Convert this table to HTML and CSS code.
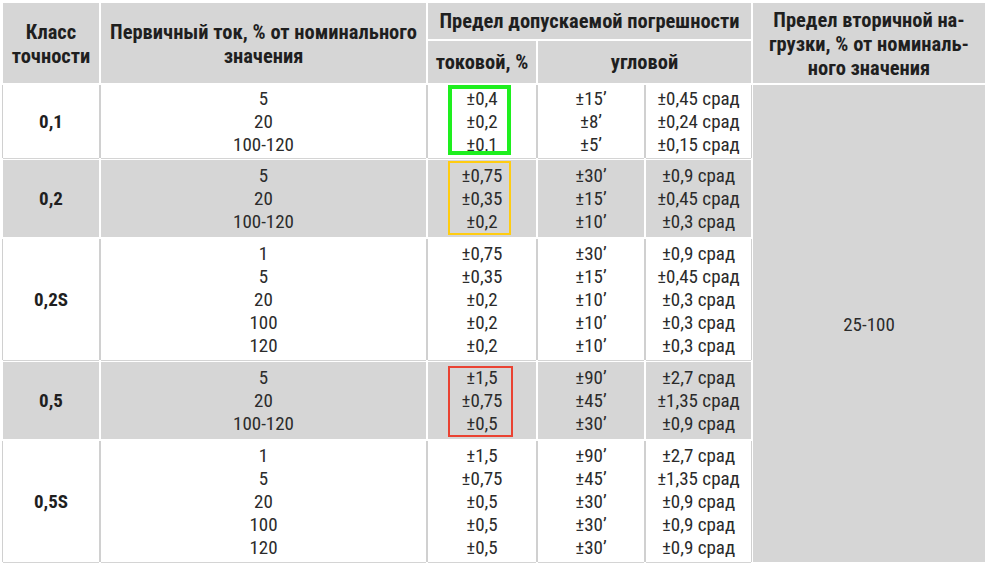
FILE: index.html
```html
<!DOCTYPE html>
<html lang="ru">
<head>
<meta charset="utf-8">
<title>Классы точности</title>
<link rel="stylesheet" href="styles.css">
</head>
<body>
<table class="acc">
  <colgroup>
    <col class="c1"><col class="c2"><col class="c3"><col class="c4"><col class="c5"><col class="c6">
  </colgroup>
  <thead>
    <tr class="h1">
      <th rowspan="2">Класс<br>точности</th>
      <th rowspan="2">Первичный ток, % от номинального<br>значения</th>
      <th colspan="3">Предел допускаемой погрешности</th>
      <th rowspan="2" class="hr">Предел вторичной на-<br>грузки, % от номиналь-<br>ного значения</th>
    </tr>
    <tr class="h2">
      <th>токовой, %</th>
      <th colspan="2">угловой</th>
    </tr>
  </thead>
  <tbody>
    <tr class="w first">
      <td class="cls">0,1</td>
      <td>5<br>20<br>100-120</td>
      <td class="bx green">±0,4<br>±0,2<br>±0,1</td>
      <td>±15’<br>±8’<br>±5’</td>
      <td>±0,45 срад<br>±0,24 срад<br>±0,15 срад</td>
      <td rowspan="5" class="load">25-100</td>
    </tr>
    <tr class="g">
      <td class="cls">0,2</td>
      <td>5<br>20<br>100-120</td>
      <td class="bx yellow">±0,75<br>±0,35<br>±0,2</td>
      <td>±30’<br>±15’<br>±10’</td>
      <td>±0,9 срад<br>±0,45 срад<br>±0,3 срад</td>
    </tr>
    <tr class="w">
      <td class="cls">0,2S</td>
      <td>1<br>5<br>20<br>100<br>120</td>
      <td>±0,75<br>±0,35<br>±0,2<br>±0,2<br>±0,2</td>
      <td>±30’<br>±15’<br>±10’<br>±10’<br>±10’</td>
      <td>±0,9 срад<br>±0,45 срад<br>±0,3 срад<br>±0,3 срад<br>±0,3 срад</td>
    </tr>
    <tr class="g">
      <td class="cls">0,5</td>
      <td>5<br>20<br>100-120</td>
      <td class="bx red">±1,5<br>±0,75<br>±0,5</td>
      <td>±90’<br>±45’<br>±30’</td>
      <td>±2,7 срад<br>±1,35 срад<br>±0,9 срад</td>
    </tr>
    <tr class="w">
      <td class="cls">0,5S</td>
      <td>1<br>5<br>20<br>100<br>120</td>
      <td>±1,5<br>±0,75<br>±0,5<br>±0,5<br>±0,5</td>
      <td>±90’<br>±45’<br>±30’<br>±30’<br>±30’</td>
      <td>±2,7 срад<br>±1,35 срад<br>±0,9 срад<br>±0,9 срад<br>±0,9 срад</td>
    </tr>
  </tbody>
</table>
</body>
</html>
```

FILE: styles.css
```css
html, body {
  margin: 0;
  padding: 0;
  background: #fff;
}

.acc {
  margin: 1px;
  border-collapse: separate;
  border-spacing: 2px;
  table-layout: fixed;
  width: 986px;
  font-family: "Roboto Condensed", "Liberation Sans", sans-serif;
  color: #2b2b2b;
}

.c1 { width: 96px; }
.c2 { width: 325px; }
.c3 { width: 108px; }
.c4 { width: 106px; }
.c5 { width: 105px; }
.c6 { width: 232px; }

th {
  background: #d6d6d6;
  font-weight: bold;
  font-size: 20.5px;
  line-height: 24px;
  color: #1f1f1f;
  text-align: center;
  vertical-align: middle;
  padding: 0;
  white-space: nowrap;
}

.h1 th { height: 36px; }
.h2 th { height: 42px; }

.h1 th[rowspan] { padding-top: 2px; }

td {
  font-size: 19px;
  line-height: 23px;
  text-align: center;
  vertical-align: middle;
  padding: 3px 0;
  white-space: nowrap;
}

.w td {
  background: #fff;
  box-shadow: 1px 0 0 #d0d0d0, -1px 0 0 #d0d0d0, 0 1px 0 #d4d4d4;
}

.first td {
  padding: 2px 0;
}

.g td {
  background: #d6d6d6;
  padding: 4px 0;
}

td.load {
  background: #d6d6d6;
  box-shadow: none;
  padding-top: 4px;
}

td.cls {
  font-weight: bold;
  color: #1f1f1f;
}

.bx {
  position: relative;
}

.bx::after {
  content: "";
  position: absolute;
  left: 20px;
  width: 63px;
  box-sizing: border-box;
}

.green::after {
  top: 0;
  bottom: 3px;
  border: 4px solid #1eef1e;
}

.yellow::after {
  top: 1px;
  bottom: 2px;
  border: 2px solid #ffcc11;
}

.red::after {
  top: 4px;
  bottom: 2px;
  left: 20px;
  width: 65px;
  border: 2px solid #ea4232;
}
```
